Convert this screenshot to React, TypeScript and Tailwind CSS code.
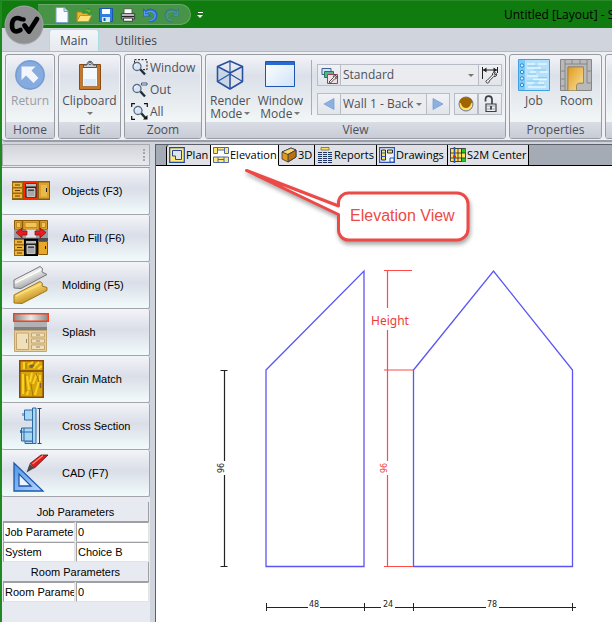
import React from "react";

type IconProps = { className?: string };

/* ---------- title bar icons ---------- */

const Logo = () => (
  <svg viewBox="0 0 40 40" className="h-10 w-10" role="img" aria-label="CV">
    <circle cx="20" cy="20" r="19" fill="#8f9092" stroke="#a3a5a8" />
    <path d="M17 14C11 11 8 15 8 20.500c0 5.500 3.500 7.500 8.500 4.500" fill="none" stroke="#000" strokeWidth="4.600" strokeLinecap="round" />
    <circle cx="19.500" cy="14.500" r="2.300" fill="#000" />
    <path d="M20.500 20.500l4.500 6 8-12.500" fill="none" stroke="#000" strokeWidth="4.800" strokeLinecap="round" strokeLinejoin="round" />
  </svg>
);

const NewIcon = () => (
  <svg viewBox="0 0 16 16" className="h-4 w-4">
    <path d="M2 .5h8l4 4v11H2z" fill="#f7fbff" stroke="#7aa0cc" />
    <path d="M10 .5v4h4" fill="#c7dbf0" stroke="#7aa0cc" />
  </svg>
);

const OpenIcon = () => (
  <svg viewBox="0 0 16 16" className="h-4 w-4">
    <path d="M1 14.500V5h4l1.500 1.500H12V14.500z" fill="#e8b832" stroke="#b98310" />
    <path d="M1 14.500L4 8.500h11.500l-3 6z" fill="#ffe27a" stroke="#c89420" />
    <path d="M8 5c1-3 3-3.500 5-2.500V1l3 3.500-4 2V5c-2-.8-3-.8-4 0z" fill="#57b83a" stroke="#2c7d1c" strokeWidth=".6" />
  </svg>
);

const SaveIcon = () => (
  <svg viewBox="0 0 16 16" className="h-4 w-4">
    <path d="M1.500 1.500h13v13h-13z" fill="#2f7de0" stroke="#1b55b0" />
    <path d="M4 2h8v5H4z" fill="#fff" />
    <path d="M4 10h8v5H4z" fill="#dce6f4" />
    <path d="M5.500 11h2v3h-2z" fill="#1b55b0" />
  </svg>
);

const PrintIcon = () => (
  <svg viewBox="0 0 18 16" className="h-4 w-4">
    <path d="M4.500 1h9v6h-9z" fill="#fff" stroke="#555" />
    <path d="M1.500 6.500h15v6h-15z" fill="#c9ccd2" stroke="#333" />
    <path d="M2 9h14v1.500H2z" fill="#222" />
    <path d="M4 11.500h10v3.500H4z" fill="#fff" stroke="#333" />
  </svg>
);

const UndoIcon = ({ className }: IconProps) => (
  <svg viewBox="0 0 16 16" className={className}>
    <path d="M4 5.500C8 1 14.500 4 13.800 9c-.3 3-2.800 5-6.300 5" fill="none" stroke="#2464c4" strokeWidth="3.200" />
    <path d="M1 1v8.500h8.500z" fill="#2464c4" />
    <path d="M4 6C7.500 2.500 13.500 4.500 13.200 9c-.2 2.500-2.200 4.200-5.500 4.500M2.500 4v4h4" fill="none" stroke="#5c9cf0" strokeWidth="1.400" />
  </svg>
);

/* ---------- ribbon icons ---------- */

const ReturnIcon = () => (
  <svg viewBox="0 0 32 32" className="h-8 w-8">
    <circle cx="16" cy="16" r="15" fill="#86abde" />
    <circle cx="16" cy="16" r="14" fill="none" stroke="#7198d0" />
    <path d="M7.500 7.500h14l-4 4 7 7.500-5 5-7.500-7.500-4.500 4.500z" fill="#f2f6fc" />
  </svg>
);

const ClipboardIcon = () => (
  <svg viewBox="0 0 24 32" className="h-8 w-6">
    <path d="M1.500 5.500h21v25h-21z" fill="#c8762a" stroke="#8a4a12" />
    <path d="M4.500 8.500h15v19h-15z" fill="#f4f9ff" stroke="#9a5a20" strokeWidth=".7" />
    <path d="M6 20h12v7H6z" fill="#dbe9f8" />
    <path d="M5.500 8.500V6H9c0-5 6-5 6 0h3.500v2.500z" fill="#c9ced6" stroke="#4b5663" />
    <circle cx="12" cy="4.500" r="1.200" fill="#fff" stroke="#4b5663" />
  </svg>
);

const Lens = () => (
  <>
    <path d="M9 10l5 5.500" stroke="#222b38" strokeWidth="2.400" />
    <circle cx="6" cy="7.500" r="4" fill="#d6e6f8" stroke="#5b6b80" strokeWidth="1.300" />
    <path d="M4 7c.3-1.500 1.200-2.200 2.500-2.300" stroke="#fff" fill="none" />
  </>
);
const ZoomWindowIcon = () => (
  <svg viewBox="0 0 17 17" className="h-[17px] w-[17px]">
    <path d="M3.500 .7h12.500v10H3.500z" fill="none" stroke="#111" strokeDasharray="2 1.500" />
    <Lens />
  </svg>
);
const ZoomOutIcon = () => (
  <svg viewBox="0 0 17 17" className="h-[17px] w-[17px]">
    <path d="M10.500 2h5.500v2h-5.500z" fill="#fff" stroke="#3b5878" />
    <Lens />
  </svg>
);
const ZoomAllIcon = () => (
  <svg viewBox="0 0 17 17" className="h-[17px] w-[17px]">
    <path d="M.7 4V.7H4M13 .7h3.300V4M.7 13v3.300H4" fill="none" stroke="#111" strokeWidth="1.200" />
    <g transform="translate(1 0)"><Lens /></g>
    <path d="M16.500 16.500v-4.500l-4.500 4.500z" fill="#111" />
  </svg>
);

const CubeIcon = () => (
  <svg viewBox="0 0 28 30" className="h-[30px] w-7">
    <g fill="none" stroke="#27519e" strokeWidth="1.600" strokeLinejoin="round">
      <path d="M14 1l12.500 5.500v15L14 29 1.500 21.500v-15z" />
      <path d="M1.500 6.500L14 13 26.500 6.500M14 13V29" />
      <path d="M14 1v12M1.500 21.500L14 14l12.500 7.500" strokeWidth="1.200" />
    </g>
    <path d="M1.500 6.500L14 13V29L1.500 21.500z" fill="#5a8ad0" fillOpacity=".15" />
  </svg>
);

const WindowIcon = () => (
  <svg viewBox="0 0 30 30" className="h-[30px] w-[30px]">
    <defs>
      <linearGradient id="winfill" x1="0" y1="0" x2="1" y2="1">
        <stop offset="0" stopColor="#fff" />
        <stop offset="1" stopColor="#cfe3f8" />
      </linearGradient>
    </defs>
    <path d="M.5 1.500h29v25H.5z" fill="url(#winfill)" stroke="#1d55b0" />
    <path d="M1 2h28v3H1z" fill="#2a6bd0" />
  </svg>
);

const LayersIcon = () => (
  <svg viewBox="0 0 17 17" className="h-[17px] w-[17px]">
    <path d="M1 1.500h9v6H1z" fill="#d6e4fa" stroke="#3f5f98" />
    <path d="M3.500 4.500h9v6h-9z" fill="#4fb892" stroke="#26775a" />
    <path d="M6.500 7.500h10v9h-10z" fill="#f3dfe4" stroke="#a04058" />
    <path d="M8 15l4.500-4.500c-.6-2 1-3 2.500-2.300l-1.300 1.500.8.900 1.500-1.300c.5 1.700-.8 2.800-2.300 2.400L9.500 16z" fill="#fff" stroke="#222" strokeWidth=".8" />
  </svg>
);

const DimToolIcon = () => (
  <svg viewBox="0 0 18 18" className="h-[18px] w-[18px]">
    <path d="M1.500 1v12M16.500 1v6M2 4h14" stroke="#222" fill="none" />
    <path d="M2 4l3.500-2.500v5zM16 4l-3.500-2.500v5z" fill="#222" />
    <path d="M6 14.500l5.500-5.500c-.6-2 1.500-3.300 3-2.300l-1.600 1.600.9.900 1.700-1.500c.8 1.800-.9 3.300-2.700 2.700l-4.600 4.700c.4 1.500-1.600 2.600-2.700 1.500-1-1-.7-2 .5-2.100z" fill="#fff" stroke="#333" />
  </svg>
);

const PlayIcon = ({ className }: IconProps) => (
  <svg viewBox="0 0 12 12" className={className}>
    <path d="M1 .5L11 6 1 11.500z" fill="#8bb0e2" stroke="#7399d2" strokeWidth=".7" />
  </svg>
);

const LampIcon = () => (
  <svg viewBox="0 0 16 16" className="h-4 w-4">
    <circle cx="8" cy="8" r="7" fill="#ffe06a" stroke="#6b7890" />
    <path d="M1.500 6.500C2 -.5 14 -.5 14.500 6.500c-1 0-1.500 1-2 2.500-1.500 4-7.500 4-9 0C3 7.500 2.500 6.500 1.500 6.500z" fill="#a06400" />
  </svg>
);

const LockIcon = () => (
  <svg viewBox="0 0 14 18" className="h-[18px] w-3.5">
    <path d="M2.500 6.500V4.500C2.500 0 9 0 9 4.500V9" fill="none" stroke="#3a3f48" strokeWidth="1.700" />
    <path d="M3 9h10v7.500H3z" fill="#eceef2" stroke="#3a3f48" strokeWidth="1.200" />
    <path d="M3.500 11h9M3.500 14h9" stroke="#8b909a" strokeWidth=".8" />
    <path d="M8 11v3.500" stroke="#222" strokeWidth="1.500" />
  </svg>
);

const JobIcon = () => (
  <svg viewBox="0 0 32 32" className="h-8 w-8">
    <path d="M.5.500h31v31H.5z" fill="#b4e0fb" stroke="#3ea0e0" />
    <path d="M1 1h6v30H1z" fill="#7cc8f6" />
    <g fill="#d8f1ff" stroke="#2b86c8">
      <circle cx="4" cy="6.500" r="1.700" /><circle cx="4" cy="13" r="1.700" /><circle cx="4" cy="19.500" r="1.700" /><circle cx="4" cy="26" r="1.700" />
    </g>
    <path d="M9 5h8m3 0h9M9 9h14M12 13h6m4 0h8M9 17h11M15 20.500h14M9 24h7m4 0h6M10 28h18" stroke="#e4f6ff" strokeWidth="1.700" />
    <path d="M10 7h10M16 11h12M10 15h8M20 18.500h9M9 22h12M14 26h12" stroke="#88ccf4" />
  </svg>
);

const RoomIcon = () => (
  <svg viewBox="0 0 32 32" className="h-8 w-8">
    <defs>
      <linearGradient id="roomfill" x1="0" y1="0" x2="1" y2="1">
        <stop offset="0" stopColor="#e09a1c" />
        <stop offset="1" stopColor="#fbe3a0" />
      </linearGradient>
    </defs>
    <path d="M.5.500h31v31h-15v-5c0-2 2-2.500 4-2.500h3V8H8v23.500H.5z" fill="#b9b9ba" stroke="#868688" />
    <path d="M5 .5V5h22V.5M5 5v26.500M27 5v19M.5 12H5M.5 20H5M12 .5V5M20 .5V5M27 12h4.500M27 24h4.500M.5 27H5" fill="none" stroke="#868688" />
    <path d="M8 8h15.500v16H20c-2 0-3.500 1-3.500 3v4.500H8z" fill="url(#roomfill)" stroke="#8f7a48" strokeWidth=".7" />
  </svg>
);

/* ---------- view tab icons ---------- */

const PlanIcon = () => (
  <svg viewBox="0 0 16 16" className="h-4 w-4 shrink-0">
    <path d="M.7.700h14.600v14.600H.7z" fill="#ffe978" stroke="#23479b" strokeWidth="1.200" />
    <path d="M3.500 3.500h9v9h-6V9h-3z" fill="#dfe3ea" stroke="#23479b" />
  </svg>
);
const ElevationIcon = () => (
  <svg viewBox="0 0 16 16" className="h-4 w-4 shrink-0">
    <path d="M.5.500h4v6h-4zM11.500.500h4v6h-4zM4.500.500h7v2.500h-7zM.5 10h15v5.500H.5z" fill="#ffe978" stroke="#4a68ae" />
    <path d="M5 10v5.500M11 10v5.500M5 12.500h6" stroke="#4a68ae" />
  </svg>
);
const ThreeDIcon = () => (
  <svg viewBox="0 0 16 16" className="h-4 w-4 shrink-0">
    <path d="M1 5l9-4 5 2v7l-8 5-6-3z" fill="#e09a1c" stroke="#27324e" strokeWidth=".8" />
    <path d="M1 5l9-4 5 2-8 4.500z" fill="#ffd86a" stroke="#27324e" strokeWidth=".8" />
    <path d="M7 7.500V15l8-5V3z" fill="#b8720e" stroke="#27324e" strokeWidth=".8" />
  </svg>
);
const ReportsIcon = () => (
  <svg viewBox="0 0 16 16" className="h-4 w-4 shrink-0">
    <path d="M4 .5h8v2.500H4z" fill="#ffe05a" stroke="#6d6a40" strokeWidth=".8" />
    <path d="M1 5.500h14M1 7.500h14M1 9.500h14M1 11.500h14M1 13.500h14M1 15.500h14" stroke="#1f3564" strokeDasharray="4 1" />
  </svg>
);
const DrawingsIcon = () => (
  <svg viewBox="0 0 16 16" className="h-4 w-4 shrink-0">
    <path d="M.6.600h14.800v14.800H.6z" fill="#eef2fb" stroke="#2c56b4" strokeWidth="1.200" />
    <path d="M2.500 3h4v10h-4zM8.500 3h5v3h-5z" fill="#ffe05a" stroke="#222c4a" />
    <path d="M2.500 6h4M2.500 9.500h4M11 11h4v4h-4z" fill="#fff" stroke="#2c56b4" />
  </svg>
);
const CenterIcon = () => (
  <svg viewBox="0 0 16 16" className="h-4 w-4 shrink-0">
    <path d="M.5 1.500h15v13H.5z" fill="#ffe05a" stroke="#222" strokeWidth=".8" />
    <path d="M11 2h4.500v4H11zM11 11h4.500v3.500H11z" fill="#18d02c" />
    <path d="M.5 6h15M.5 11h15M8 1.500v13M11.500 1.500v13" stroke="#222" strokeWidth=".8" />
    <path d="M4.500 0v16" stroke="#2653b4" strokeWidth="1.600" />
    <circle cx="4.500" cy="9.500" r="1.500" fill="#e02020" />
  </svg>
);

/* ---------- sidebar icons ---------- */

const Drawers = ({ x, y }: { x: number; y: number }) => (
  <g transform={`translate(${x} ${y})`}>
    <path d="M0 0h11v17H0z" fill="#9a6a10" />
    <path d="M1 1h9v4H1zM1 6.500h9v4H1zM1 12h9v4H1z" fill="#ecb43c" />
    <path d="M3 3h5M3 8.500h5M3 14h5" stroke="#6b3f00" />
  </g>
);
const Oven = ({ x, y, stroke }: { x: number; y: number; stroke: string }) => (
  <g transform={`translate(${x} ${y})`}>
    <path d="M.7.700h12.600v15.600H.7z" fill="#222" stroke={stroke} strokeWidth="1.400" />
    <path d="M2 2h10v2.500H2z" fill="#bbb" />
    <path d="M3 6.500h8v8H3z" fill="#a8a8a8" stroke="#ddd" strokeWidth=".8" />
    <path d="M4 7.500h6v1.500H4z" fill="#444" />
  </g>
);
const ObjectsIcon = () => (
  <svg viewBox="0 0 38 20" className="h-5 w-[38px]">
    <path d="M0 0h38v19H0z" fill="#8a5c10" />
    <Drawers x={0} y={1} />
    <Oven x={12} y={1} stroke="#ff2a00" />
    <path d="M27 1.500h10v16H27z" fill="#dda02a" />
    <path d="M29 4h6v11.500h-6z" fill="#eab94c" />
    <path d="M34.500 7v4" stroke="#222" />
  </svg>
);
const AutoFillIcon = () => (
  <svg viewBox="0 0 34 36" className="h-9 w-[34px]">
    <path d="M.5.500h33v9H.5z" fill="#dda02a" stroke="#8a5a08" />
    <path d="M8.500.500v9M25.500.500v9" stroke="#8a5a08" strokeWidth="1.500" />
    <path d="M11 2.500h12v5H11zM2.500 2.500h4v5h-4zM27.500 2.500h4v5h-4z" fill="#f0c458" stroke="#a8720c" strokeWidth=".6" />
    <path d="M0 9.500h34v9H0z" fill="#9a9da3" />
    <path d="M12 9.500h10v8H12z" fill="#dfe1e6" />
    <path d="M0 18h34v3H0z" fill="#4c4c50" />
    <path d="M2 12.500l6-4.500v3h5v4H8v3zM32 12.500l-6-4.500v3h-5v4h5v3z" fill="#e81c1c" stroke="#8a0c0c" strokeWidth=".7" />
    <Drawers x={0} y={19} />
    <Oven x={10} y={19} stroke="#000" />
    <path d="M24.500 21.500h9v13h-9z" fill="#e6a92a" stroke="#8a5a08" />
    <path d="M31.500 26v3" stroke="#222" />
  </svg>
);
const MoldingIcon = () => (
  <svg viewBox="0 0 36 38" className="h-[38px] w-9">
    <defs>
      <linearGradient id="silver" x1="0" y1="0" x2=".6" y2="1">
        <stop offset="0" stopColor="#8d8d8d" /><stop offset=".45" stopColor="#f2f2f2" /><stop offset="1" stopColor="#888" />
      </linearGradient>
      <linearGradient id="gold" x1="0" y1="0" x2=".6" y2="1">
        <stop offset="0" stopColor="#b8862a" /><stop offset=".45" stopColor="#f8d468" /><stop offset="1" stopColor="#b07a10" />
      </linearGradient>
    </defs>
    <path d="M1 14L27 .5l2.500 2L29 6l5 2.500L8 22.500 1 22z" fill="url(#silver)" stroke="#777" />
    <path d="M2 17L28 4" stroke="#fff" strokeWidth="1.300" />
    <path d="M1 29L27 15.500l2.500 2L29 20l5 1.500v3L9 37.500 1 37z" fill="url(#gold)" stroke="#a07414" />
    <path d="M3 30L28 18" stroke="#fbe08c" strokeWidth="1.300" />
  </svg>
);
const SplashIcon = () => (
  <svg viewBox="0 0 36 39" className="h-[39px] w-9">
    <defs>
      <linearGradient id="steel" x1="0" y1="0" x2="1" y2="0">
        <stop offset="0" stopColor="#888" /><stop offset=".5" stopColor="#e8e8e8" /><stop offset="1" stopColor="#888" />
      </linearGradient>
    </defs>
    <path d="M.7.700h34.600v7.600H.7z" fill="url(#steel)" stroke="#ff3c14" strokeWidth="1.400" />
    <path d="M1 9h33v7H1z" fill="#b2b2b4" />
    <path d="M1 14h33v3H1z" fill="#808084" />
    <path d="M1.500 17.500h32v21h-32z" fill="#e8cf9c" stroke="#c3a570" />
    <path d="M3.500 20h12v16.500h-12zM18.500 20h13v4h-13zM18.500 26h13v4h-13zM18.500 32h13v4.500h-13z" fill="#f1dfb8" stroke="#c3a570" />
    <path d="M13.500 26v4M23 22h4M23 28h4M23 34h4" stroke="#888" />
  </svg>
);
const GrainIcon = () => (
  <svg viewBox="0 0 25 38" className="h-[38px] w-[25px]">
    <path d="M.8.800h23.400v36.400H.8z" fill="#d8a40c" stroke="#8a4a06" strokeWidth="1.600" />
    <path d="M5 2v7M9 5l5-3M14 8l6-6M19 9l4-3M4 14v20M8 16l2 14M13 13l-2 9M14 24l4-10M16 35l4-14M21 15v6M8 35l1-4" stroke="#f8d420" strokeWidth="2" fill="none" />
    <path d="M7 3v6M12 8l4-6M6 14l1 18M12 24l2 12M17 13l3 9" stroke="#a8740a" fill="none" />
    <path d="M1 11h23" stroke="#7a4206" strokeWidth="1.500" />
    <path d="M10.500 5.500h4l-1 1.500h-3M21.500 23v5" stroke="#7f6240" strokeWidth="1.500" fill="none" />
  </svg>
);
const SectionIcon = () => (
  <svg viewBox="0 0 22 38" className="h-[38px] w-[22px]">
    <g fill="#a9d6f0" stroke="#2b6aa4">
      <path d="M12.500 1h3.500v35.500h-3.500zM4.500 3h8v10h-8zM5 34h7.500v2.500H5z" />
      <path d="M1.500 21h11v13h-11z" />
      <path d="M1.500 25h11M4 21v13M3 6v3M.6 23v3" fill="none" />
    </g>
    <path d="M19.500 1v36M17.500 1.500h4M17.500 36.500h4" stroke="#29486c" fill="none" />
  </svg>
);
const CadIcon = () => (
  <svg viewBox="0 0 36 38" className="h-[38px] w-9">
    <defs>
      <linearGradient id="cadfill" x1="0" y1="0" x2="1" y2="1">
        <stop offset="0" stopColor="#4f94e6" /><stop offset="1" stopColor="#b7d8fb" />
      </linearGradient>
    </defs>
    <path d="M1 9v28h29z" fill="url(#cadfill)" stroke="#1c58b0" strokeWidth="1.300" />
    <path d="M6 20v12h12z" fill="#eef5fd" stroke="#1c58b0" strokeWidth="1.300" />
    <path d="M13.500 18.500l3-8.500 5 4z" fill="#4a4a4a" />
    <path d="M17 9.500L28 1h7L21.500 14z" fill="#d81e1e" stroke="#6e0c0c" strokeWidth=".8" />
    <path d="M19.500 10L30 1.500" stroke="#ff8a7a" strokeWidth="1.200" />
  </svg>
);

/* ---------- shared pieces ---------- */

const Caret = () => <span aria-hidden="true" className="inline-block border-x-3 border-t-3 border-x-transparent border-t-[#777]" />;

const Group = ({ label, className = "", children }: { label: string; className?: string; children?: React.ReactNode }) => (
  <section
    aria-label={label || undefined}
    className={`flex h-[85px] shrink-0 flex-col overflow-hidden rounded-[3px] border border-[#989ba2] bg-linear-to-b from-[#f3f4f8] via-[#dce0e9] via-25% to-[#f1f6f6] to-80% shadow-[inset_0_0_0_1px_#f2f3f6] ${className}`}
  >
    <div className="flex min-h-0 flex-1 items-start justify-center">{children}</div>
    <h2 className="h-4 bg-linear-to-b from-[#dadde5] to-[#c8ccd6] text-center text-[12px] leading-4 text-[#4d5058]">{label}</h2>
  </section>
);

const BigButton = ({ icon, children, disabled }: { icon: React.ReactNode; children: React.ReactNode; disabled?: boolean }) => (
  <button type="button" disabled={disabled} className="flex flex-col items-center pt-1 text-[12px] leading-[13px] whitespace-nowrap text-[#4d5058] disabled:text-[#999ca2]">
    <span className="flex h-8 items-center">{icon}</span>
    <span className="mt-[3px] flex flex-col items-center">{children}</span>
  </button>
);

const SmallButton = ({ label, children }: { label: string; children: React.ReactNode }) => (
  <button type="button" aria-label={label} className="flex h-[22px] w-6 shrink-0 items-center justify-center border border-[#b8bcc5] bg-linear-to-b from-[#f1f2f5] to-[#e1e4ea]">
    {children}
  </button>
);

const Combo = ({ label, value, className }: { label: string; value: string; className: string }) => (
  <span className={`relative flex h-[22px] items-center border-y border-[#b8bcc5] bg-[#eaecf0] ${className}`}>
    <select aria-label={label} className="h-full w-full appearance-none bg-transparent pl-[2px] text-[12px] text-[#4d5058]">
      <option>{value}</option>
    </select>
    <span className="pointer-events-none absolute right-1 flex"><Caret /></span>
  </span>
);

const viewTabs = [
  { name: "Plan", icon: <PlanIcon />, width: "w-[45px]" },
  { name: "Elevation", icon: <ElevationIcon />, width: "w-[68px]" },
  { name: "3D", icon: <ThreeDIcon />, width: "w-9" },
  { name: "Reports", icon: <ReportsIcon />, width: "w-[62px]" },
  { name: "Drawings", icon: <DrawingsIcon />, width: "w-[71px]" },
  { name: "S2M Center", icon: <CenterIcon />, width: "w-[81px]" },
];

const tools = [
  { name: "Objects (F3)", icon: <ObjectsIcon /> },
  { name: "Auto Fill (F6)", icon: <AutoFillIcon /> },
  { name: "Molding (F5)", icon: <MoldingIcon /> },
  { name: "Splash", icon: <SplashIcon /> },
  { name: "Grain Match", icon: <GrainIcon /> },
  { name: "Cross Section", icon: <SectionIcon /> },
  { name: "CAD (F7)", icon: <CadIcon /> },
];

const ParamHeader = ({ children }: { children: string }) => (
  <h3 className="h-5 border-r border-b border-[#a0a0a4] bg-[#e8eaf1] text-center leading-5">{children}</h3>
);

const ParamRow = ({ id, name, value }: { id: string; name: string; value: string }) => (
  <div className="grid h-5 grid-cols-[73px_1fr]">
    <label htmlFor={id} className="mr-px overflow-hidden border border-t-[#a0a0a4] border-r-[#e3e3e3] border-b-[#e3e3e3] border-l-[#a0a0a4] bg-white pl-px leading-[19px] whitespace-nowrap">{name}</label>
    <input id={id} defaultValue={value} className="min-w-0 border border-t-[#a0a0a4] border-r-[#e3e3e3] border-b-[#e3e3e3] border-l-[#a0a0a4] bg-white pl-px" />
  </div>
);

const ElevationDrawing = () => (
  <svg viewBox="156 166 456 456" className="block h-[456px] w-[456px]" role="img" aria-label="Wall elevation with dimensions">
    <g fill="none" stroke="#5b55f5" strokeWidth="1.300">
      <path d="M266 370L364 271V566.500H266z" />
      <path d="M413.500 370L493.500 271L572.500 370V566.500H413.500z" />
    </g>
    <g fill="none" stroke="#ff4a4a" strokeWidth="1.200">
      <path d="M387.500 271V308M387.500 330V461M387.500 475V566M384 270.500h28M384 370h29M384 566.500h29" />
    </g>
    <g fill="none" stroke="#222">
      <path d="M224.500 370V461M224.500 475V566M220.500 370.500h7M220.500 566.500h7" strokeWidth="1.200" />
      <path d="M266 607.500h42M320 607.500h61M395 607.500h91M499 607.500h77M266.500 603v8M364.500 603v8M413.500 603v8M572.500 603v8" />
    </g>
    <g fontFamily="DejaVu Sans, sans-serif" fontSize="8" textAnchor="middle">
      <text x="390" y="325" fontFamily="Noto Sans, sans-serif" fontSize="12" fill="#f03a3a">Height</text>
      <text transform="translate(387 468) rotate(-90)" fill="#f03a3a">96</text>
      <text transform="translate(224 468) rotate(-90)" fill="#222">96</text>
      <g fill="#222">
        <text x="314" y="607">48</text>
        <text x="388" y="607">24</text>
        <text x="492" y="607">78</text>
      </g>
    </g>
  </svg>
);

const Callout = () => (
  <div className="absolute top-0 left-[84px] h-[84px] w-[236px]">
    <svg viewBox="240 166 236 84" className="absolute inset-0 h-full w-full drop-shadow-[1px_3px_2px_rgba(0,0,0,0.35)]" aria-hidden="true">
      <path
        d="M338.500 206V203a10 10 0 0 1 10-10H457a11 11 0 0 1 11 11V229a11 11 0 0 1-11 11H348.500a10 10 0 0 1-10-10V214.500L246.500 170.500z"
        fill="#fff" stroke="#ec4a47" strokeWidth="3" strokeLinejoin="round"
      />
    </svg>
    <p className="relative pt-10 pl-[110px] font-['Liberation_Sans',sans-serif] text-[16px] leading-5 whitespace-nowrap text-[#ec4a47]">Elevation View</p>
  </div>
);

export default function App() {
  return (
    <div className="flex min-h-screen flex-col overflow-hidden border-l-2 border-[#1f8a1f] bg-[#d0d4dd] font-['Open_Sans','Noto_Sans',sans-serif] text-black">
      <header className="relative flex h-7 items-center border-t border-[#2a8a2a] bg-[#107c10]">
        <div className="ml-9 flex h-[21px] items-center gap-1.5 rounded-r-full border border-l-0 border-[#6aa86a] bg-[#479447] pr-2.5 pl-4">
          <button type="button" aria-label="New"><NewIcon /></button>
          <button type="button" aria-label="Open"><OpenIcon /></button>
          <button type="button" aria-label="Save"><SaveIcon /></button>
          <button type="button" aria-label="Print"><PrintIcon /></button>
          <button type="button" aria-label="Undo"><UndoIcon className="h-4 w-4" /></button>
          <button type="button" aria-label="Redo"><UndoIcon className="h-4 w-4 -scale-x-100 opacity-45" /></button>
        </div>
        <button type="button" aria-label="Customize toolbar" className="ml-1.5 flex flex-col items-center gap-0.5">
          <span className="h-px w-[5px] bg-white" />
          <span className="border-x-3 border-t-3 border-x-transparent border-t-white" />
        </button>
        <h1 className="absolute left-[502px] text-[12px] whitespace-nowrap">Untitled [Layout] - S</h1>
        <button type="button" aria-label="Application menu" className="absolute top-1 left-0.5"><Logo /></button>
      </header>

      <nav className="flex h-[23px] items-end pl-[47px] text-[12px] text-[#42454c]">
        <button type="button" className="h-[22px] w-[50px] rounded-t-[3px] border border-b-0 border-[#a9dde4] bg-linear-to-b from-[#f2f5f9] to-[#e6eaf0]">Main</button>
        <button type="button" className="h-[22px] px-4 pt-0.5">Utilities</button>
      </nav>

      <div className="flex h-[91px] gap-[3px] overflow-hidden rounded-bl-[4px] border-t border-b-2 border-[#b5b8c0] border-b-[#9a9da5] bg-[#eef0f4] pt-0.5 pl-[3px]">
        <Group label="Home" className="w-[50px]">
          <BigButton disabled icon={<ReturnIcon />}>Return</BigButton>
        </Group>
        <Group label="Edit" className="w-[63px]">
          <BigButton icon={<ClipboardIcon />}>
            <span>Clipboard</span>
            <span className="flex h-2 items-end"><Caret /></span>
          </BigButton>
        </Group>
        <Group label="Zoom" className="w-[78px]">
          <div className="flex w-full flex-col gap-[5px] pt-1 pl-1.5 text-[12px] text-[#4d5058]">
            <button type="button" className="flex h-[17px] items-center gap-0.5"><ZoomWindowIcon />Window</button>
            <button type="button" className="flex h-[17px] items-center gap-0.5"><ZoomOutIcon />Out</button>
            <button type="button" className="flex h-[17px] items-center gap-0.5"><ZoomAllIcon />All</button>
          </div>
        </Group>
        <Group label="View" className="w-[301px]">
          <div className="flex w-full pl-1">
            <div className="flex w-[101px] justify-between pr-2">
              <BigButton icon={<CubeIcon />}>
                <span>Render</span>
                <span className="flex items-center gap-0.5">Mode<Caret /></span>
              </BigButton>
              <BigButton icon={<WindowIcon />}>
                <span>Window</span>
                <span className="flex items-center gap-0.5">Mode<Caret /></span>
              </BigButton>
            </div>
            <div className="mt-[5px] h-[55px] w-px bg-[#a9adb6]" />
            <div className="flex flex-1 flex-col gap-[7px] pt-[9px] pr-[3px] pl-[5px]">
              <div className="flex">
                <SmallButton label="Layers"><LayersIcon /></SmallButton>
                <Combo label="Layer set" value="Standard" className="flex-1" />
                <SmallButton label="Dimension settings"><DimToolIcon /></SmallButton>
              </div>
              <div className="flex">
                <SmallButton label="Previous wall"><PlayIcon className="h-3 w-3 -scale-x-100" /></SmallButton>
                <Combo label="Wall" value="Wall 1 - Back" className="flex-1" />
                <SmallButton label="Next wall"><PlayIcon className="h-3 w-3" /></SmallButton>
                <span className="ml-1 flex">
                  <SmallButton label="Light"><LampIcon /></SmallButton>
                  <SmallButton label="Lock"><LockIcon /></SmallButton>
                </span>
              </div>
            </div>
          </div>
        </Group>
        <Group label="Properties" className="w-[93px]">
          <div className="flex gap-2.5">
            <BigButton icon={<JobIcon />}>Job</BigButton>
            <BigButton icon={<RoomIcon />}>Room</BigButton>
          </div>
        </Group>
        <Group label="" className="w-[60px]" />
      </div>

      <div className="flex flex-1 pt-0.5">
        <aside className="flex w-[153px] shrink-0 flex-col pr-[5px] font-['Liberation_Sans',sans-serif] text-[11px]">
          <div className="flex flex-1 flex-col bg-[#e8eaf1]">
            <div className="flex h-[22px] items-center justify-end border border-[#a6a9b0] bg-linear-to-b from-[#d2d4da] to-[#e8eaee] pr-1">
              <span className="h-3 border-l-2 border-dotted border-[#a4a7ae]" />
            </div>
            <div className="mt-px flex flex-col border-t border-[#9c9ca2]">
              {tools.map((t) => (
                <button key={t.name} type="button" className="flex h-[47px] items-center rounded-[2px] border-r border-b border-[#a4a4aa] bg-linear-to-b from-[#f3f4f8] via-[#dadee8] via-45% to-[#f1fbfb] text-left">
                  <span className="flex w-[58px] shrink-0 justify-center">{t.icon}</span>
                  <span className="pl-0.5">{t.name}</span>
                </button>
              ))}
            </div>
            <div className="mt-[5px] px-px">
              <ParamHeader>Job Parameters</ParamHeader>
              <ParamRow id="job-parameter" name="Job Parameter" value="0" />
              <ParamRow id="job-system" name="System" value="Choice B" />
              <ParamHeader>Room Parameters</ParamHeader>
              <ParamRow id="room-parameter" name="Room Parameter" value="0" />
            </div>
          </div>
        </aside>

        <main className="flex min-w-0 flex-1 flex-col border-t border-l border-[#5d6068] bg-[#a4abb5]">
          <div role="tablist" className="flex h-[21px] border-b border-black pl-2.5">
            {viewTabs.map((t) => (
              <button
                key={t.name}
                type="button"
                role="tab"
                aria-selected={t.name === "Elevation"}
                className={`flex h-[21px] shrink-0 items-center gap-px border-r border-r-black border-b border-b-black bg-[#dfe1e6] pl-0.5 text-[11px] whitespace-nowrap first:rounded-tl-[3px] first:border-l first:border-l-black aria-selected:border-b-white aria-selected:bg-white ${t.width}`}
              >
                {t.icon}
                {t.name}
              </button>
            ))}
          </div>
          <div className="relative flex-1 bg-white">
            <ElevationDrawing />
            <Callout />
          </div>
        </main>
      </div>
    </div>
  );
}
